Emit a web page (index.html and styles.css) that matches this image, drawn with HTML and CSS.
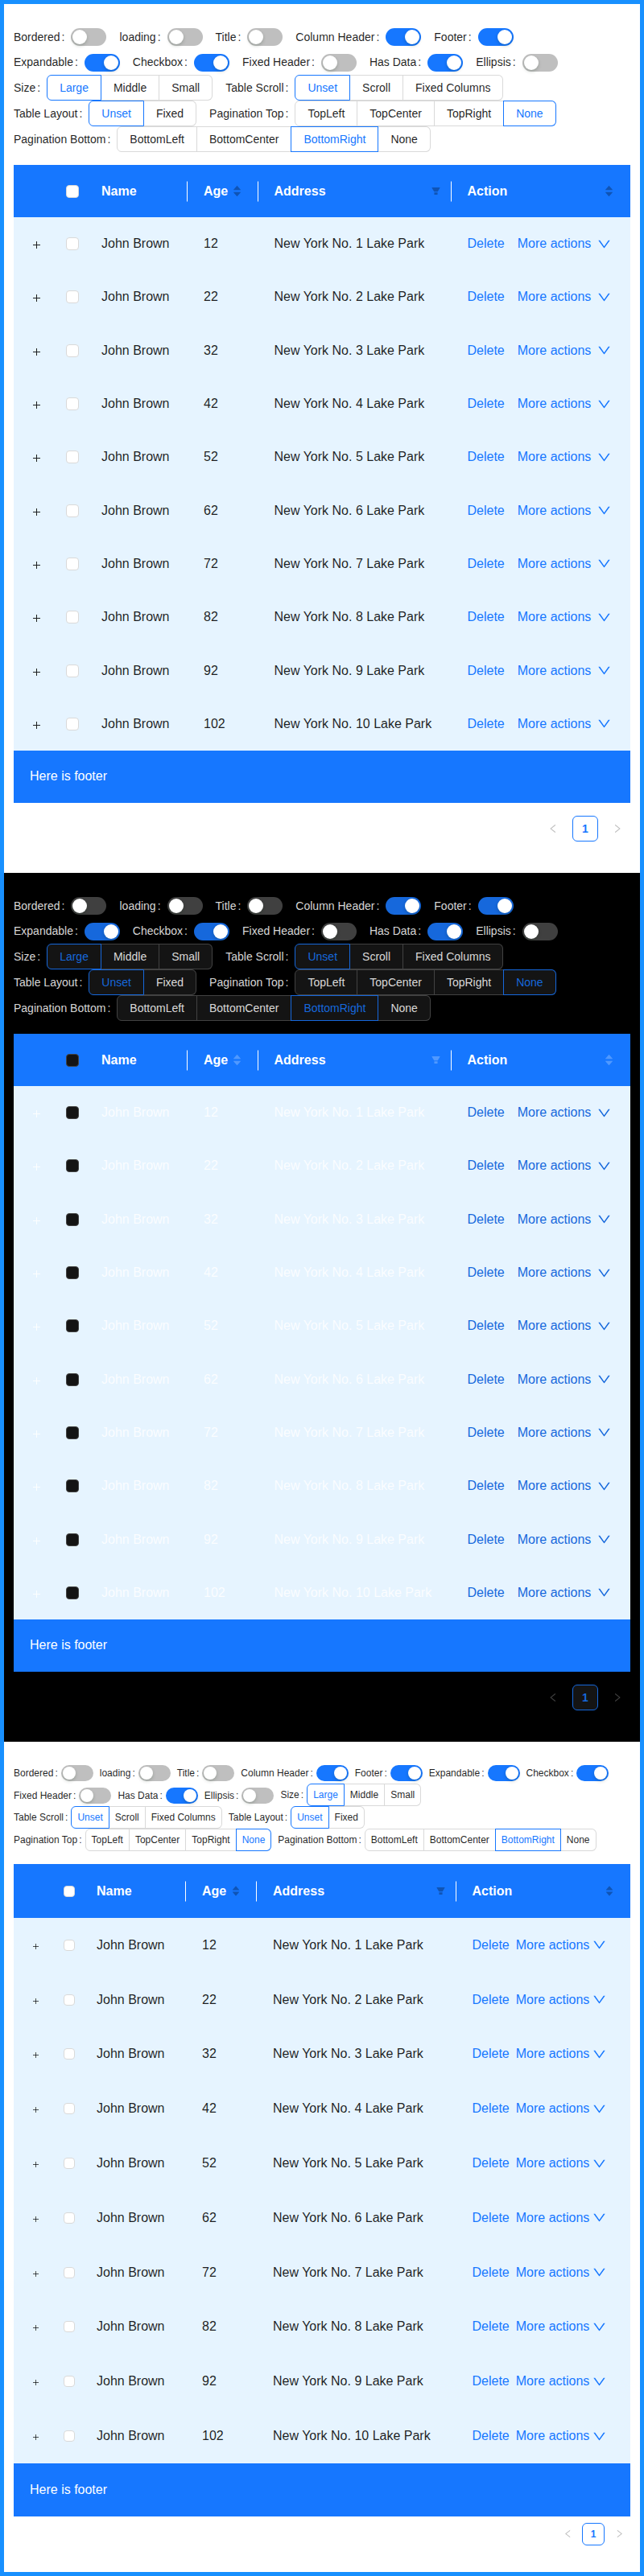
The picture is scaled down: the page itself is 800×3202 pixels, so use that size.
FILE: index.html
```html
<!DOCTYPE html>
<html lang="en">
<head>
<meta charset="utf-8">
<title>Table settings</title>
<link rel="stylesheet" href="styles.css">
</head>
<body>
<svg class="defs" aria-hidden="true">
<symbol id="i-up" viewBox="0 0 1024 1024"><path d="M858.9 689L530.5 308.2c-9.4-10.9-27.5-10.9-37 0L165.1 689c-12.2 14.2-1.2 35 18.5 35h656.8c19.7 0 30.7-20.8 18.5-35z"/></symbol>
<symbol id="i-dn" viewBox="0 0 1024 1024"><path d="M840.4 300H183.6c-19.7 0-30.7 20.8-18.5 35l328.4 380.8c9.4 10.9 27.5 10.9 37 0L858.9 335c12.2-14.2 1.2-35-18.5-35z"/></symbol>
<symbol id="i-filter" viewBox="0 0 1024 1024"><path d="M349 838c0 17.7 14.2 32 31.7 32h262.6c17.5 0 31.7-14.3 31.7-32V642H349v196zm531.1-684H143.9c-24.5 0-39.8 26.7-27.5 48l221.3 376h348.8l221.3-376c12.1-21.3-3.2-48-27.7-48z"/></symbol>
<symbol id="i-down" viewBox="0 0 1024 1024"><path d="M884 256h-75c-5.1 0-9.9 2.5-12.9 6.6L512 654.2 227.9 262.6c-3-4.1-7.8-6.6-12.9-6.6h-75c-6.5 0-10.3 7.4-6.5 12.7l352.6 486.1c12.8 17.6 39 17.6 51.7 0l352.6-486.1c3.9-5.3.1-12.7-6.4-12.7z"/></symbol>
<symbol id="i-left" viewBox="0 0 1024 1024"><path d="M724 218.3V141c0-6.7-7.7-10.4-12.9-6.3L260.3 486.8a31.86 31.86 0 0 0 0 50.3l450.8 352.1c5.3 4.1 12.9.4 12.9-6.3v-77.3c0-4.9-2.3-9.6-6.1-12.6l-360-281 360-281.1c3.8-3 6.1-7.7 6.1-12.6z"/></symbol>
<symbol id="i-right" viewBox="0 0 1024 1024"><path d="M765.7 486.8L314.9 134.7A7.97 7.97 0 0 0 302 141v77.3c0 4.9 2.3 9.6 6.1 12.6l360 281.1-360 281.1c-3.9 3-6.1 7.7-6.1 12.6V883c0 6.6 7.6 10.3 12.9 6.2l450.8-352.1a31.96 31.96 0 0 0 0-50.3z"/></symbol>
<symbol id="i-plus" viewBox="0 0 9 9"><path d="M0 4.5h9M4.5 0v9" fill="none" stroke="currentColor" stroke-width="1" shape-rendering="crispEdges"/></symbol>
</svg>

<main class="frame">

<section class="panel panel-large">
<form class="opts">
<div class="opt opt-sw"><span class="lbl">Bordered<span class="colon">:</span></span><span class="sw"></span></div>
<div class="opt opt-sw"><span class="lbl">loading<span class="colon">:</span></span><span class="sw"></span></div>
<div class="opt opt-sw"><span class="lbl">Title<span class="colon">:</span></span><span class="sw"></span></div>
<div class="opt opt-sw"><span class="lbl">Column Header<span class="colon">:</span></span><span class="sw on"></span></div>
<div class="opt opt-sw"><span class="lbl">Footer<span class="colon">:</span></span><span class="sw on"></span></div>
<div class="opt opt-sw"><span class="lbl">Expandable<span class="colon">:</span></span><span class="sw on"></span></div>
<div class="opt opt-sw"><span class="lbl">Checkbox<span class="colon">:</span></span><span class="sw on"></span></div>
<div class="opt opt-sw"><span class="lbl">Fixed Header<span class="colon">:</span></span><span class="sw"></span></div>
<div class="opt opt-sw"><span class="lbl">Has Data<span class="colon">:</span></span><span class="sw on"></span></div>
<div class="opt opt-sw"><span class="lbl">Ellipsis<span class="colon">:</span></span><span class="sw"></span></div>
<div class="opt"><span class="lbl">Size<span class="colon">:</span></span><div class="seg"><span class="sel">Large</span><span>Middle</span><span>Small</span></div></div>
<div class="opt"><span class="lbl">Table Scroll<span class="colon">:</span></span><div class="seg"><span class="sel">Unset</span><span>Scroll</span><span>Fixed Columns</span></div></div>
<div class="opt"><span class="lbl">Table Layout<span class="colon">:</span></span><div class="seg"><span class="sel">Unset</span><span>Fixed</span></div></div>
<div class="opt"><span class="lbl">Pagination Top<span class="colon">:</span></span><div class="seg"><span>TopLeft</span><span>TopCenter</span><span>TopRight</span><span class="sel">None</span></div></div>
<div class="opt"><span class="lbl">Pagination Bottom<span class="colon">:</span></span><div class="seg"><span>BottomLeft</span><span>BottomCenter</span><span class="sel">BottomRight</span><span>None</span></div></div>
</form>
<table class="grid">
<colgroup><col class="w-exp"><col class="w-sel"><col class="w-name"><col class="w-age"><col class="w-addr"><col class="w-act"></colgroup>
<thead><tr><th></th><th class="c-sel"><span class="box"></span></th><th class="div">Name</th><th class="div"><div class="th-in">Age<span class="sort"><svg><use href="#i-up"/></svg><svg><use href="#i-dn"/></svg></span></div></th><th class="div th-filter"><div class="th-in">Address<svg class="filter"><use href="#i-filter"/></svg></div></th><th><div class="th-in">Action<span class="sort"><svg><use href="#i-up"/></svg><svg><use href="#i-dn"/></svg></span></div></th></tr></thead>
<tbody>
<tr><td class="c-exp"><svg class="plus"><use href="#i-plus"/></svg></td><td class="c-sel"><span class="box"></span></td><td>John Brown</td><td>12</td><td>New York No. 1 Lake Park</td><td><div class="acts"><a class="lnk">Delete</a><a class="lnk more">More actions<svg class="chev"><use href="#i-down"/></svg></a></div></td></tr>
<tr><td class="c-exp"><svg class="plus"><use href="#i-plus"/></svg></td><td class="c-sel"><span class="box"></span></td><td>John Brown</td><td>22</td><td>New York No. 2 Lake Park</td><td><div class="acts"><a class="lnk">Delete</a><a class="lnk more">More actions<svg class="chev"><use href="#i-down"/></svg></a></div></td></tr>
<tr><td class="c-exp"><svg class="plus"><use href="#i-plus"/></svg></td><td class="c-sel"><span class="box"></span></td><td>John Brown</td><td>32</td><td>New York No. 3 Lake Park</td><td><div class="acts"><a class="lnk">Delete</a><a class="lnk more">More actions<svg class="chev"><use href="#i-down"/></svg></a></div></td></tr>
<tr><td class="c-exp"><svg class="plus"><use href="#i-plus"/></svg></td><td class="c-sel"><span class="box"></span></td><td>John Brown</td><td>42</td><td>New York No. 4 Lake Park</td><td><div class="acts"><a class="lnk">Delete</a><a class="lnk more">More actions<svg class="chev"><use href="#i-down"/></svg></a></div></td></tr>
<tr><td class="c-exp"><svg class="plus"><use href="#i-plus"/></svg></td><td class="c-sel"><span class="box"></span></td><td>John Brown</td><td>52</td><td>New York No. 5 Lake Park</td><td><div class="acts"><a class="lnk">Delete</a><a class="lnk more">More actions<svg class="chev"><use href="#i-down"/></svg></a></div></td></tr>
<tr><td class="c-exp"><svg class="plus"><use href="#i-plus"/></svg></td><td class="c-sel"><span class="box"></span></td><td>John Brown</td><td>62</td><td>New York No. 6 Lake Park</td><td><div class="acts"><a class="lnk">Delete</a><a class="lnk more">More actions<svg class="chev"><use href="#i-down"/></svg></a></div></td></tr>
<tr><td class="c-exp"><svg class="plus"><use href="#i-plus"/></svg></td><td class="c-sel"><span class="box"></span></td><td>John Brown</td><td>72</td><td>New York No. 7 Lake Park</td><td><div class="acts"><a class="lnk">Delete</a><a class="lnk more">More actions<svg class="chev"><use href="#i-down"/></svg></a></div></td></tr>
<tr><td class="c-exp"><svg class="plus"><use href="#i-plus"/></svg></td><td class="c-sel"><span class="box"></span></td><td>John Brown</td><td>82</td><td>New York No. 8 Lake Park</td><td><div class="acts"><a class="lnk">Delete</a><a class="lnk more">More actions<svg class="chev"><use href="#i-down"/></svg></a></div></td></tr>
<tr><td class="c-exp"><svg class="plus"><use href="#i-plus"/></svg></td><td class="c-sel"><span class="box"></span></td><td>John Brown</td><td>92</td><td>New York No. 9 Lake Park</td><td><div class="acts"><a class="lnk">Delete</a><a class="lnk more">More actions<svg class="chev"><use href="#i-down"/></svg></a></div></td></tr>
<tr><td class="c-exp"><svg class="plus"><use href="#i-plus"/></svg></td><td class="c-sel"><span class="box"></span></td><td>John Brown</td><td>102</td><td>New York No. 10 Lake Park</td><td><div class="acts"><a class="lnk">Delete</a><a class="lnk more">More actions<svg class="chev"><use href="#i-down"/></svg></a></div></td></tr>
</tbody>
</table>
<div class="tfoot">Here is footer</div>
<nav class="pager"><span class="pg-arrow"><svg><use href="#i-left"/></svg></span><span class="pg-num">1</span><span class="pg-arrow"><svg><use href="#i-right"/></svg></span></nav>
</section>

<section class="panel panel-large panel-dark">
<form class="opts">
<div class="opt opt-sw"><span class="lbl">Bordered<span class="colon">:</span></span><span class="sw"></span></div>
<div class="opt opt-sw"><span class="lbl">loading<span class="colon">:</span></span><span class="sw"></span></div>
<div class="opt opt-sw"><span class="lbl">Title<span class="colon">:</span></span><span class="sw"></span></div>
<div class="opt opt-sw"><span class="lbl">Column Header<span class="colon">:</span></span><span class="sw on"></span></div>
<div class="opt opt-sw"><span class="lbl">Footer<span class="colon">:</span></span><span class="sw on"></span></div>
<div class="opt opt-sw"><span class="lbl">Expandable<span class="colon">:</span></span><span class="sw on"></span></div>
<div class="opt opt-sw"><span class="lbl">Checkbox<span class="colon">:</span></span><span class="sw on"></span></div>
<div class="opt opt-sw"><span class="lbl">Fixed Header<span class="colon">:</span></span><span class="sw"></span></div>
<div class="opt opt-sw"><span class="lbl">Has Data<span class="colon">:</span></span><span class="sw on"></span></div>
<div class="opt opt-sw"><span class="lbl">Ellipsis<span class="colon">:</span></span><span class="sw"></span></div>
<div class="opt"><span class="lbl">Size<span class="colon">:</span></span><div class="seg"><span class="sel">Large</span><span>Middle</span><span>Small</span></div></div>
<div class="opt"><span class="lbl">Table Scroll<span class="colon">:</span></span><div class="seg"><span class="sel">Unset</span><span>Scroll</span><span>Fixed Columns</span></div></div>
<div class="opt"><span class="lbl">Table Layout<span class="colon">:</span></span><div class="seg"><span class="sel">Unset</span><span>Fixed</span></div></div>
<div class="opt"><span class="lbl">Pagination Top<span class="colon">:</span></span><div class="seg"><span>TopLeft</span><span>TopCenter</span><span>TopRight</span><span class="sel">None</span></div></div>
<div class="opt"><span class="lbl">Pagination Bottom<span class="colon">:</span></span><div class="seg"><span>BottomLeft</span><span>BottomCenter</span><span class="sel">BottomRight</span><span>None</span></div></div>
</form>
<table class="grid">
<colgroup><col class="w-exp"><col class="w-sel"><col class="w-name"><col class="w-age"><col class="w-addr"><col class="w-act"></colgroup>
<thead><tr><th></th><th class="c-sel"><span class="box"></span></th><th class="div">Name</th><th class="div"><div class="th-in">Age<span class="sort"><svg><use href="#i-up"/></svg><svg><use href="#i-dn"/></svg></span></div></th><th class="div th-filter"><div class="th-in">Address<svg class="filter"><use href="#i-filter"/></svg></div></th><th><div class="th-in">Action<span class="sort"><svg><use href="#i-up"/></svg><svg><use href="#i-dn"/></svg></span></div></th></tr></thead>
<tbody>
<tr><td class="c-exp"><svg class="plus"><use href="#i-plus"/></svg></td><td class="c-sel"><span class="box"></span></td><td>John Brown</td><td>12</td><td>New York No. 1 Lake Park</td><td><div class="acts"><a class="lnk">Delete</a><a class="lnk more">More actions<svg class="chev"><use href="#i-down"/></svg></a></div></td></tr>
<tr><td class="c-exp"><svg class="plus"><use href="#i-plus"/></svg></td><td class="c-sel"><span class="box"></span></td><td>John Brown</td><td>22</td><td>New York No. 2 Lake Park</td><td><div class="acts"><a class="lnk">Delete</a><a class="lnk more">More actions<svg class="chev"><use href="#i-down"/></svg></a></div></td></tr>
<tr><td class="c-exp"><svg class="plus"><use href="#i-plus"/></svg></td><td class="c-sel"><span class="box"></span></td><td>John Brown</td><td>32</td><td>New York No. 3 Lake Park</td><td><div class="acts"><a class="lnk">Delete</a><a class="lnk more">More actions<svg class="chev"><use href="#i-down"/></svg></a></div></td></tr>
<tr><td class="c-exp"><svg class="plus"><use href="#i-plus"/></svg></td><td class="c-sel"><span class="box"></span></td><td>John Brown</td><td>42</td><td>New York No. 4 Lake Park</td><td><div class="acts"><a class="lnk">Delete</a><a class="lnk more">More actions<svg class="chev"><use href="#i-down"/></svg></a></div></td></tr>
<tr><td class="c-exp"><svg class="plus"><use href="#i-plus"/></svg></td><td class="c-sel"><span class="box"></span></td><td>John Brown</td><td>52</td><td>New York No. 5 Lake Park</td><td><div class="acts"><a class="lnk">Delete</a><a class="lnk more">More actions<svg class="chev"><use href="#i-down"/></svg></a></div></td></tr>
<tr><td class="c-exp"><svg class="plus"><use href="#i-plus"/></svg></td><td class="c-sel"><span class="box"></span></td><td>John Brown</td><td>62</td><td>New York No. 6 Lake Park</td><td><div class="acts"><a class="lnk">Delete</a><a class="lnk more">More actions<svg class="chev"><use href="#i-down"/></svg></a></div></td></tr>
<tr><td class="c-exp"><svg class="plus"><use href="#i-plus"/></svg></td><td class="c-sel"><span class="box"></span></td><td>John Brown</td><td>72</td><td>New York No. 7 Lake Park</td><td><div class="acts"><a class="lnk">Delete</a><a class="lnk more">More actions<svg class="chev"><use href="#i-down"/></svg></a></div></td></tr>
<tr><td class="c-exp"><svg class="plus"><use href="#i-plus"/></svg></td><td class="c-sel"><span class="box"></span></td><td>John Brown</td><td>82</td><td>New York No. 8 Lake Park</td><td><div class="acts"><a class="lnk">Delete</a><a class="lnk more">More actions<svg class="chev"><use href="#i-down"/></svg></a></div></td></tr>
<tr><td class="c-exp"><svg class="plus"><use href="#i-plus"/></svg></td><td class="c-sel"><span class="box"></span></td><td>John Brown</td><td>92</td><td>New York No. 9 Lake Park</td><td><div class="acts"><a class="lnk">Delete</a><a class="lnk more">More actions<svg class="chev"><use href="#i-down"/></svg></a></div></td></tr>
<tr><td class="c-exp"><svg class="plus"><use href="#i-plus"/></svg></td><td class="c-sel"><span class="box"></span></td><td>John Brown</td><td>102</td><td>New York No. 10 Lake Park</td><td><div class="acts"><a class="lnk">Delete</a><a class="lnk more">More actions<svg class="chev"><use href="#i-down"/></svg></a></div></td></tr>
</tbody>
</table>
<div class="tfoot">Here is footer</div>
<nav class="pager"><span class="pg-arrow"><svg><use href="#i-left"/></svg></span><span class="pg-num">1</span><span class="pg-arrow"><svg><use href="#i-right"/></svg></span></nav>
</section>

<section class="panel panel-compact">
<form class="opts">
<div class="opt opt-sw"><span class="lbl">Bordered<span class="colon">:</span></span><span class="sw"></span></div>
<div class="opt opt-sw"><span class="lbl">loading<span class="colon">:</span></span><span class="sw"></span></div>
<div class="opt opt-sw"><span class="lbl">Title<span class="colon">:</span></span><span class="sw"></span></div>
<div class="opt opt-sw"><span class="lbl">Column Header<span class="colon">:</span></span><span class="sw on"></span></div>
<div class="opt opt-sw"><span class="lbl">Footer<span class="colon">:</span></span><span class="sw on"></span></div>
<div class="opt opt-sw"><span class="lbl">Expandable<span class="colon">:</span></span><span class="sw on"></span></div>
<div class="opt opt-sw"><span class="lbl">Checkbox<span class="colon">:</span></span><span class="sw on"></span></div>
<div class="opt opt-sw"><span class="lbl">Fixed Header<span class="colon">:</span></span><span class="sw"></span></div>
<div class="opt opt-sw"><span class="lbl">Has Data<span class="colon">:</span></span><span class="sw on"></span></div>
<div class="opt opt-sw"><span class="lbl">Ellipsis<span class="colon">:</span></span><span class="sw"></span></div>
<div class="opt"><span class="lbl">Size<span class="colon">:</span></span><div class="seg"><span class="sel">Large</span><span>Middle</span><span>Small</span></div></div>
<div class="opt"><span class="lbl">Table Scroll<span class="colon">:</span></span><div class="seg"><span class="sel">Unset</span><span>Scroll</span><span>Fixed Columns</span></div></div>
<div class="opt"><span class="lbl">Table Layout<span class="colon">:</span></span><div class="seg"><span class="sel">Unset</span><span>Fixed</span></div></div>
<div class="opt"><span class="lbl">Pagination Top<span class="colon">:</span></span><div class="seg"><span>TopLeft</span><span>TopCenter</span><span>TopRight</span><span class="sel">None</span></div></div>
<div class="opt"><span class="lbl">Pagination Bottom<span class="colon">:</span></span><div class="seg"><span>BottomLeft</span><span>BottomCenter</span><span class="sel">BottomRight</span><span>None</span></div></div>
</form>
<table class="grid">
<colgroup><col class="w-exp"><col class="w-sel"><col class="w-name"><col class="w-age"><col class="w-addr"><col class="w-act"></colgroup>
<thead><tr><th></th><th class="c-sel"><span class="box"></span></th><th class="div">Name</th><th class="div"><div class="th-in">Age<span class="sort"><svg><use href="#i-up"/></svg><svg><use href="#i-dn"/></svg></span></div></th><th class="div th-filter"><div class="th-in">Address<svg class="filter"><use href="#i-filter"/></svg></div></th><th><div class="th-in">Action<span class="sort"><svg><use href="#i-up"/></svg><svg><use href="#i-dn"/></svg></span></div></th></tr></thead>
<tbody>
<tr><td class="c-exp"><svg class="plus"><use href="#i-plus"/></svg></td><td class="c-sel"><span class="box"></span></td><td>John Brown</td><td>12</td><td>New York No. 1 Lake Park</td><td><div class="acts"><a class="lnk">Delete</a><a class="lnk more">More actions<svg class="chev"><use href="#i-down"/></svg></a></div></td></tr>
<tr><td class="c-exp"><svg class="plus"><use href="#i-plus"/></svg></td><td class="c-sel"><span class="box"></span></td><td>John Brown</td><td>22</td><td>New York No. 2 Lake Park</td><td><div class="acts"><a class="lnk">Delete</a><a class="lnk more">More actions<svg class="chev"><use href="#i-down"/></svg></a></div></td></tr>
<tr><td class="c-exp"><svg class="plus"><use href="#i-plus"/></svg></td><td class="c-sel"><span class="box"></span></td><td>John Brown</td><td>32</td><td>New York No. 3 Lake Park</td><td><div class="acts"><a class="lnk">Delete</a><a class="lnk more">More actions<svg class="chev"><use href="#i-down"/></svg></a></div></td></tr>
<tr><td class="c-exp"><svg class="plus"><use href="#i-plus"/></svg></td><td class="c-sel"><span class="box"></span></td><td>John Brown</td><td>42</td><td>New York No. 4 Lake Park</td><td><div class="acts"><a class="lnk">Delete</a><a class="lnk more">More actions<svg class="chev"><use href="#i-down"/></svg></a></div></td></tr>
<tr><td class="c-exp"><svg class="plus"><use href="#i-plus"/></svg></td><td class="c-sel"><span class="box"></span></td><td>John Brown</td><td>52</td><td>New York No. 5 Lake Park</td><td><div class="acts"><a class="lnk">Delete</a><a class="lnk more">More actions<svg class="chev"><use href="#i-down"/></svg></a></div></td></tr>
<tr><td class="c-exp"><svg class="plus"><use href="#i-plus"/></svg></td><td class="c-sel"><span class="box"></span></td><td>John Brown</td><td>62</td><td>New York No. 6 Lake Park</td><td><div class="acts"><a class="lnk">Delete</a><a class="lnk more">More actions<svg class="chev"><use href="#i-down"/></svg></a></div></td></tr>
<tr><td class="c-exp"><svg class="plus"><use href="#i-plus"/></svg></td><td class="c-sel"><span class="box"></span></td><td>John Brown</td><td>72</td><td>New York No. 7 Lake Park</td><td><div class="acts"><a class="lnk">Delete</a><a class="lnk more">More actions<svg class="chev"><use href="#i-down"/></svg></a></div></td></tr>
<tr><td class="c-exp"><svg class="plus"><use href="#i-plus"/></svg></td><td class="c-sel"><span class="box"></span></td><td>John Brown</td><td>82</td><td>New York No. 8 Lake Park</td><td><div class="acts"><a class="lnk">Delete</a><a class="lnk more">More actions<svg class="chev"><use href="#i-down"/></svg></a></div></td></tr>
<tr><td class="c-exp"><svg class="plus"><use href="#i-plus"/></svg></td><td class="c-sel"><span class="box"></span></td><td>John Brown</td><td>92</td><td>New York No. 9 Lake Park</td><td><div class="acts"><a class="lnk">Delete</a><a class="lnk more">More actions<svg class="chev"><use href="#i-down"/></svg></a></div></td></tr>
<tr><td class="c-exp"><svg class="plus"><use href="#i-plus"/></svg></td><td class="c-sel"><span class="box"></span></td><td>John Brown</td><td>102</td><td>New York No. 10 Lake Park</td><td><div class="acts"><a class="lnk">Delete</a><a class="lnk more">More actions<svg class="chev"><use href="#i-down"/></svg></a></div></td></tr>
</tbody>
</table>
<div class="tfoot">Here is footer</div>
<nav class="pager"><span class="pg-arrow"><svg><use href="#i-left"/></svg></span><span class="pg-num">1</span><span class="pg-arrow"><svg><use href="#i-right"/></svg></span></nav>
</section>

</main>
</body>
</html>
```
FILE: styles.css
```css
* { box-sizing: border-box; }

html, body { margin: 0; padding: 0; }

body {
  font-family: "Liberation Sans", Arial, sans-serif;
  font-size: 14px;
  background: #fff;
}

.defs { position: absolute; width: 0; height: 0; overflow: hidden; }

.frame {
  width: 800px;
  height: 3202px;
  border: 5px solid #1890ff;
}

/* theme tokens */
.panel {
  --text: rgba(0, 0, 0, .88);
  --bg: #fff;
  --seg-bg: #fff;
  --line: #d9d9d9;
  --accent: #1677ff;
  --sw-off: #bfbfbf;
  --icon: rgba(0, 0, 0, .29);
  --pg-off: rgba(0, 0, 0, .25);
  --cell: rgba(0, 0, 0, .88);
  background: var(--bg);
  color: var(--text);
  padding: 25px 12px 0;
}

.panel-dark {
  --text: rgba(255, 255, 255, .85);
  --bg: #000;
  --seg-bg: #141414;
  --line: #424242;
  --accent: #1668dc;
  --sw-off: rgba(255, 255, 255, .25);
  --icon: rgba(255, 255, 255, .25);
  --pg-off: rgba(255, 255, 255, .25);
  --cell: rgba(255, 255, 255, .85);
}

/* size tokens */
.panel-large {
  --fs: 14px;
  --row: 32px;
  --sw-row: 31.5px;
  --opt-gap: 16px;
  --colon-end: 8px;
  --sw-w: 44px;
  --sw-h: 22px;
  --knob: 18px;
  --seg-pad: 15px;
  --box: 16px;
  --head-h: 65px;
  --row-h: 66.3px;
  --foot-h: 65px;
  --pg: 32px;
  --pg-fs: 14px;
  --pg-icon: 14px;
  --pg-gap: 8px;
  --pg-top: 16px;
  --sort: 13px;
  --plus: 9px;
  --act-gap: 16px;
  --chev-gap: 7px;
  height: 1080px;
}

.panel-compact {
  --fs: 12px;
  --row: 28px;
  --sw-row: 27px;
  --opt-gap: 8px;
  --colon-end: 4px;
  --sw-w: 40px;
  --sw-h: 20px;
  --knob: 16px;
  --seg-pad: 7px;
  --box: 14px;
  --head-h: 67px;
  --row-h: 67.8px;
  --foot-h: 66px;
  --pg: 28px;
  --pg-fs: 12px;
  --pg-icon: 13px;
  --pg-gap: 4px;
  --pg-top: 8px;
  --sort: 12px;
  --plus: 7px;
  --act-gap: 8px;
  --chev-gap: 3px;
  height: 1032px;
}

/* option form */
.opts {
  display: flex;
  flex-wrap: wrap;
  align-items: flex-end;
  margin: 0 0 16px;
  font-size: var(--fs);
}

.opt {
  display: flex;
  align-items: center;
  height: var(--row);
  margin-right: var(--opt-gap);
}

.opt-sw { height: var(--sw-row); }

.lbl { white-space: nowrap; }

.colon { margin-left: 2px; margin-right: var(--colon-end); }

.sw {
  display: flex;
  align-items: center;
  width: var(--sw-w);
  height: var(--sw-h);
  margin-top: 1px;
  padding: 2px;
  border-radius: 100px;
  background: var(--sw-off);
}

.sw::before {
  content: "";
  width: var(--knob);
  height: var(--knob);
  border-radius: 50%;
  background: #fff;
  box-shadow: 0 2px 4px rgba(0, 35, 11, .2);
}

.sw.on {
  justify-content: flex-end;
  background: var(--accent);
}

.seg { display: flex; }

.seg > span {
  position: relative;
  height: var(--row);
  line-height: calc(var(--row) - 2px);
  padding: 0 var(--seg-pad);
  white-space: nowrap;
  background: var(--seg-bg);
  border: 1px solid var(--line);
  border-left-width: 0;
  box-shadow: -1px 0 0 var(--line);
}

.seg > span:first-child {
  border-left-width: 1px;
  border-radius: 6px 0 0 6px;
  box-shadow: none;
}

.seg > span:last-child { border-radius: 0 6px 6px 0; }

.seg > span.sel {
  z-index: 1;
  color: var(--accent);
  border-color: var(--accent);
  box-shadow: -1px 0 0 var(--accent);
}

.seg > span.sel:first-child { box-shadow: none; }

/* table */
.grid {
  width: 100%;
  table-layout: fixed;
  border-collapse: separate;
  border-spacing: 0;
  font-size: 16px;
}

.panel-large .w-exp { width: 56px; }
.panel-large .w-sel { width: 33px; }
.panel-large .w-name { width: 127px; }
.panel-large .w-age { width: 87.5px; }
.panel-large .w-addr { width: 240px; }
.panel-large .w-act { width: 222.5px; }

.panel-compact .w-exp { width: 55px; }
.panel-compact .w-sel { width: 28px; }
.panel-compact .w-name { width: 131px; }
.panel-compact .w-age { width: 88px; }
.panel-compact .w-addr { width: 247.5px; }
.panel-compact .w-act { width: 216.5px; }

.grid th {
  position: relative;
  height: var(--head-h);
  padding: 0 20px;
  background: #1677ff;
  color: #fff;
  font-weight: 700;
  text-align: left;
}

.grid th.div::after {
  content: "";
  position: absolute;
  top: 50%;
  right: 0;
  width: 1px;
  height: 25px;
  transform: translateY(-50%);
  background: #fff;
}

.grid th.th-filter { padding-right: 13px; }

.th-in {
  display: flex;
  align-items: center;
  justify-content: space-between;
}

.sort {
  display: flex;
  flex-direction: column;
  color: var(--icon);
}

.sort svg {
  display: block;
  width: var(--sort);
  height: var(--sort);
  fill: currentColor;
}

.sort svg + svg { margin-top: -4.5px; }

.filter {
  width: 13px;
  height: 13px;
  color: var(--icon);
  fill: currentColor;
}

.grid td {
  height: var(--row-h);
  padding: 0 20px;
  background: #e6f4ff;
  color: var(--cell);
  white-space: nowrap;
}

.grid .c-exp { padding: 0; color: var(--cell); }

.grid .c-sel { padding: 0; text-align: center; }

.plus {
  display: block;
  width: var(--plus);
  height: var(--plus);
  margin: 3px auto 0;
}

.box {
  display: block;
  width: var(--box);
  height: var(--box);
  margin: 0 auto;
  border: 1px solid var(--line);
  border-radius: 4px;
  background: var(--seg-bg);
}

.acts {
  display: flex;
  align-items: center;
  gap: var(--act-gap);
}

.lnk { color: var(--accent); }

.more {
  display: flex;
  align-items: center;
  gap: var(--chev-gap);
}

.chev {
  width: 19px;
  height: 19px;
  fill: currentColor;
}

.tfoot {
  display: flex;
  align-items: center;
  height: var(--foot-h);
  padding: 0 20px;
  background: #1677ff;
  color: #fff;
  font-size: 16px;
}

/* pagination */
.pager {
  display: flex;
  justify-content: flex-end;
  gap: var(--pg-gap);
  margin-top: var(--pg-top);
}

.pg-arrow {
  display: flex;
  align-items: center;
  justify-content: center;
  width: var(--pg);
  height: var(--pg);
  color: var(--pg-off);
}

.pg-arrow svg {
  width: var(--pg-icon);
  height: var(--pg-icon);
  fill: currentColor;
}

.pg-num {
  width: var(--pg);
  height: var(--pg);
  line-height: calc(var(--pg) - 2px);
  text-align: center;
  font-size: var(--pg-fs);
  font-weight: 700;
  color: var(--accent);
  background: var(--seg-bg);
  border: 1px solid var(--accent);
  border-radius: 6px;
}
```
